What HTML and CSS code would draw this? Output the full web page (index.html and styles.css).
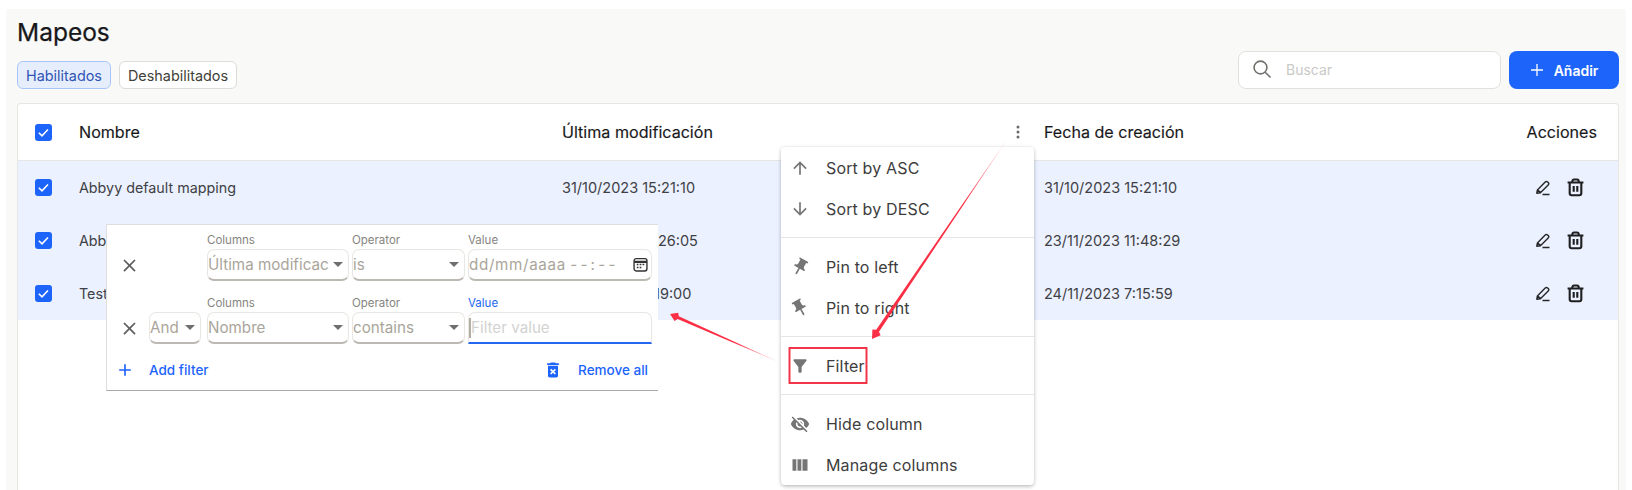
FILE: index.html
```html
<!DOCTYPE html>
<html lang="es">
<head>
<meta charset="utf-8">
<title>Mapeos</title>
<link rel="stylesheet" href="styles.css">
</head>
<body>
<svg class="defs" width="0" height="0" aria-hidden="true">
  <symbol id="i-check" viewBox="0 0 16 16"><path d="M3.6 8.2l3 3 5.6-6" fill="none" stroke="#fff" stroke-width="1.5"/></symbol>
  <symbol id="i-pencil" viewBox="0 0 16 16"><path d="M1.800 13.200l.6-3.200L10.200 2c.7-.7 1.700-.7 2.400 0l.6.6c.7.7.7 1.700 0 2.400l-7.800 7.800-3.600.4zM2.800 10l3 2.800M7.500 14.500h7" fill="none" stroke="#27272a" stroke-width="1.400" stroke-linejoin="round"/></symbol>
  <symbol id="i-trash" viewBox="0 0 18 18"><path d="M1.500 4.200h15M3.500 4.200v10.300c0 1 .7 1.800 1.800 1.800h7.400c1.100 0 1.800-.8 1.800-1.800V4.200M6 4V3c0-1 .7-1.600 1.600-1.600h2.800c.9 0 1.600.6 1.600 1.600v1M7.300 7.500v5.500M10.700 7.500v5.500" fill="none" stroke="#1f1f22" stroke-width="2"/></symbol>
  <symbol id="i-close" viewBox="0 0 24 24"><path d="M19 6.410L17.590 5 12 10.590 6.410 5 5 6.410 10.590 12 5 17.590 6.410 19 12 13.410 17.590 19 19 17.590 13.410 12z"/></symbol>
  <symbol id="i-caret" viewBox="0 0 10 5"><path d="M0 0h10L5 5z"/></symbol>
  <symbol id="i-pin" viewBox="0 0 24 24"><path d="M16 9V4h1c.55 0 1-.45 1-1s-.45-1-1-1H7c-.55 0-1 .45-1 1s.45 1 1 1h1v5c0 1.660-1.340 3-3 3v2h5.970v7l1 1 1-1v-7H19v-2c-1.660 0-3-1.340-3-3z"/></symbol>
</svg>

<main class="panel">
  <h1 class="title">Mapeos</h1>
  <div class="toolbar">
    <div class="chips">
      <span class="chip chip-on">Habilitados</span>
      <span class="chip">Deshabilitados</span>
    </div>
    <div class="actions">
      <div class="search">
        <svg class="search-icon" viewBox="0 0 20 20"><circle cx="8.500" cy="8.500" r="6.400" fill="none" stroke="#6f6f6c" stroke-width="1.600"/><path d="M13.200 13.200l5.300 5.300" stroke="#6f6f6c" stroke-width="1.600"/></svg>
        <span class="search-text">Buscar</span>
      </div>
      <button class="add"><svg viewBox="0 0 14 14"><path d="M7 1v12M1 7h12" stroke="#fff" stroke-width="1.300"/></svg>Añadir</button>
    </div>
  </div>

  <section class="table">
    <div class="row head">
      <span class="check"><svg><use href="#i-check"/></svg></span>
      <span>Nombre</span>
      <span class="head-menu">Última modificación
        <svg class="dots" viewBox="0 0 4 14"><circle cx="2" cy="2" r="1.500"/><circle cx="2" cy="7" r="1.500"/><circle cx="2" cy="12" r="1.500"/></svg>
      </span>
      <span>Fecha de creación</span>
      <span class="right">Acciones</span>
    </div>
    <div class="row body">
      <span class="check"><svg><use href="#i-check"/></svg></span>
      <span class="name">Abbyy default mapping</span>
      <span>31/10/2023 15:21:10</span>
      <span>31/10/2023 15:21:10</span>
      <span class="row-actions"><svg class="ic-pen"><use href="#i-pencil"/></svg><svg class="ic-trash"><use href="#i-trash"/></svg></span>
    </div>
    <div class="row body">
      <span class="check"><svg><use href="#i-check"/></svg></span>
      <span class="name">Abbyy mapping</span>
      <span>23/11/2023 11:26:05</span>
      <span>23/11/2023 11:48:29</span>
      <span class="row-actions"><svg class="ic-pen"><use href="#i-pencil"/></svg><svg class="ic-trash"><use href="#i-trash"/></svg></span>
    </div>
    <div class="row body">
      <span class="check"><svg><use href="#i-check"/></svg></span>
      <span class="name">Test mapping</span>
      <span>24/11/2023 7:19:00</span>
      <span>24/11/2023 7:15:59</span>
      <span class="row-actions"><svg class="ic-pen"><use href="#i-pencil"/></svg><svg class="ic-trash"><use href="#i-trash"/></svg></span>
    </div>
  </section>
</main>

<aside class="filter">
  <div class="f-row">
    <svg class="f-x"><use href="#i-close"/></svg>
    <span></span>
    <div class="f-field"><label>Columns</label><div class="f-box"><span>Última modificac</span><svg class="caret"><use href="#i-caret"/></svg></div></div>
    <div class="f-field"><label>Operator</label><div class="f-box"><span>is</span><svg class="caret"><use href="#i-caret"/></svg></div></div>
    <div class="f-field"><label>Value</label><div class="f-box"><span><span class="f-date">dd/mm/aaaa</span> <span class="f-time">--:--</span></span><svg class="cal" viewBox="0 0 14 14"><rect x="1" y="1.500" width="12" height="11.500" rx="2" fill="none" stroke="#333" stroke-width="1.300"/><path d="M1 4.600h12" stroke="#333" stroke-width="2"/><path d="M3.500 7h1.600M6.200 7h1.600M8.900 7h1.600M3.500 9.800h1.600M6.200 9.800h1.600" stroke="#333" stroke-width="1.400"/></svg></div></div>
  </div>
  <div class="f-row">
    <svg class="f-x"><use href="#i-close"/></svg>
    <div class="f-field f-and"><div class="f-box"><span>And</span><svg class="caret"><use href="#i-caret"/></svg></div></div>
    <div class="f-field"><label>Columns</label><div class="f-box"><span>Nombre</span><svg class="caret"><use href="#i-caret"/></svg></div></div>
    <div class="f-field"><label>Operator</label><div class="f-box"><span>contains</span><svg class="caret"><use href="#i-caret"/></svg></div></div>
    <div class="f-field f-active"><label>Value</label><div class="f-box"><i class="cursor"></i><span>Filter value</span></div></div>
  </div>
  <div class="f-foot">
    <span class="f-link"><svg class="f-plus" viewBox="0 0 24 24"><path d="M19 13h-6v6h-2v-6H5v-2h6V5h2v6h6v2z"/></svg>Add filter</span>
    <span class="f-link f-remove"><svg class="f-del" viewBox="0 0 24 24"><path d="M6 19c0 1.100.9 2 2 2h8c1.100 0 2-.9 2-2V7H6v12zm2.460-7.120l1.410-1.410L12 12.590l2.120-2.120 1.410 1.410L13.410 14l2.120 2.120-1.410 1.410L12 15.410l-2.120 2.120-1.410-1.410L10.590 14l-2.130-2.120zM15.500 4l-1-1h-5l-1 1H5v2h14V4z"/></svg>Remove all</span>
  </div>
</aside>

<nav class="menu">
  <div class="m-item"><svg viewBox="0 0 24 24"><path d="M4 12l1.410 1.410L11 7.830V20h2V7.830l5.580 5.590L20 12l-8-8-8 8z"/></svg>Sort by ASC</div>
  <div class="m-item"><svg viewBox="0 0 24 24"><path d="M20 12l-1.410-1.410L13 16.170V4h-2v12.170l-5.580-5.590L4 12l8 8 8-8z"/></svg>Sort by DESC</div>
  <hr>
  <div class="m-item"><svg class="pin-l"><use href="#i-pin"/></svg>Pin to left</div>
  <div class="m-item"><svg class="pin-r"><use href="#i-pin"/></svg>Pin to right</div>
  <hr>
  <div class="m-item"><svg viewBox="0 0 24 24"><path d="M4.250 5.610C6.270 8.200 10 13 10 13v6c0 .55.45 1 1 1h2c.55 0 1-.45 1-1v-6s3.720-4.800 5.740-7.390c.51-.66.04-1.610-.79-1.610H5.040c-.83 0-1.300.95-.79 1.610z"/></svg>Filter</div>
  <hr>
  <div class="m-item"><svg viewBox="0 0 24 24"><path d="M12 7c2.760 0 5 2.240 5 5 0 .65-.13 1.260-.36 1.830l2.920 2.920c1.510-1.260 2.700-2.890 3.430-4.750-1.730-4.390-6-7.500-11-7.500-1.400 0-2.740.25-3.980.7l2.160 2.160C10.740 7.130 11.350 7 12 7zM2 4.270l2.280 2.280.46.46C3.080 8.300 1.780 10.020 1 12c1.730 4.390 6 7.500 11 7.500 1.550 0 3.030-.3 4.380-.84l.42.42L19.730 22 21 20.730 3.270 3 2 4.270zM7.530 9.800l1.550 1.550c-.05.21-.08.43-.08.65 0 1.660 1.340 3 3 3 .22 0 .44-.03.65-.08l1.550 1.550c-.67.33-1.410.53-2.200.53-2.760 0-5-2.240-5-5 0-.79.2-1.530.53-2.200zm4.310-.78l3.150 3.150.02-.16c0-1.660-1.340-3-3-3l-.17.01z"/></svg>Hide column</div>
  <div class="m-item"><svg viewBox="0 0 24 24"><path d="M3 5h4.600v14H3zM9 5h4.600v14H9zM15 5h6v14h-6z"/></svg>Manage columns</div>
</nav>

<svg class="notes" viewBox="0 0 1632 490" aria-hidden="true">
  <defs>
    <linearGradient id="fade1" gradientUnits="userSpaceOnUse" x1="1010" y1="135" x2="965" y2="205"><stop offset="0" stop-color="#fb2f45" stop-opacity=".1"/><stop offset="1" stop-color="#fb2f45"/></linearGradient>
    <linearGradient id="fade2" gradientUnits="userSpaceOnUse" x1="781" y1="363" x2="735" y2="343"><stop offset="0" stop-color="#fb2f45" stop-opacity=".1"/><stop offset="1" stop-color="#fb2f45"/></linearGradient>
  </defs>
  <path d="M1010 135L879 331.700L880.600 335.200L872 339L872.400 329.600L876.200 329.700Z" fill="url(#fade1)"/>
  <path d="M781 363L678.800 316.300L678.200 312.700L670 314L674.600 320.900L677.600 319.100Z" fill="url(#fade2)"/>
  <rect x="789.500" y="348" width="77" height="35" fill="none" stroke="#f3354a" stroke-width="2"/>
</svg>
</body>
</html>
```
FILE: styles.css
```css
* { box-sizing: border-box; }
html, body { margin: 0; height: 100%; }
body {
  width: 1632px;
  height: 490px;
  overflow: hidden;
  position: relative;
  background: #fff;
  font-family: Inter, "Liberation Sans", sans-serif;
  color: #3f3f46;
}
.defs { position: absolute; }
.panel {
  margin: 9px 6px 0;
  height: 481px;
  padding: 10px 7px 0 11px;
  background: #f9f9f7;
  display: flex;
  flex-direction: column;
}
.title {
  margin: 0;
  font-size: 24.500px;
  line-height: 26px;
  font-weight: 400;
  color: #18181b;
  -webkit-text-stroke: .25px #18181b;
}
.toolbar {
  display: flex;
  justify-content: space-between;
  align-items: flex-end;
  margin-top: -3px;
  height: 47px;
}
.chips { display: flex; gap: 8px; }
.chip {
  height: 28px;
  padding: 0 8px;
  display: flex;
  align-items: center;
  font-size: 14.400px;
  color: #3f3f3a;
  background: #fff;
  border: 1px solid #dddcd8;
  border-radius: 6px;
}
.chip-on { color: #2f55b4; background: #e6eefe; border-color: #a9c6fb; }
.actions { display: flex; gap: 8px; }
.search {
  width: 263px;
  height: 38px;
  display: flex;
  align-items: center;
  gap: 14px;
  padding-left: 13px;
  padding-bottom: 2px;
  background: #fff;
  border: 1px solid #e2e1dd;
  border-radius: 8px;
}
.search-icon { width: 20px; height: 20px; }
.search-text { font-size: 14px; color: #c9c9c6; }
.add {
  width: 110px;
  height: 38px;
  border: 0;
  border-radius: 8px;
  background: #1d64fb;
  color: #fff;
  font: 600 14px Inter, sans-serif;
  display: flex;
  align-items: center;
  justify-content: center;
  gap: 10px;
}
.add svg { width: 14px; height: 14px; }
.table {
  flex: 1;
  margin-top: 14px;
  background: #fff;
  border: 1px solid #e6e6e3;
  border-bottom: 0;
  border-radius: 4px 4px 0 0;
}
.row {
  display: grid;
  grid-template-columns: 61px 483px 482px 1fr auto;
  align-items: center;
  padding-right: 21px;
}
.head {
  height: 57px;
  font-size: 16.100px;
  color: #18181b;
  border-bottom: 1px solid #e6e6e6;
  -webkit-text-stroke: .15px #18181b;
}
.body {
  height: 53px;
  font-size: 14.500px;
  color: #3f3f46;
  background: #ebf1fe;
}
.name { font-size: 14.300px; }
.check {
  margin-left: 17px;
  width: 17px;
  height: 17px;
  border-radius: 3px;
  background: #1d64fb;
}
.check svg { display: block; width: 17px; height: 17px; }
.head-menu { display: flex; justify-content: space-between; align-items: center; padding-right: 24px; }
.dots { width: 4px; height: 14px; fill: #6b6b6b; }
.right { text-align: right; }
.row-actions { display: flex; gap: 15px; align-items: center; padding-right: 12px; }
.ic-pen { width: 16px; height: 16px; }
.ic-trash { width: 19px; height: 19px; }

.filter {
  position: absolute;
  left: 106px;
  top: 224px;
  width: 552px;
  height: 167px;
  background: #fff;
  border: 1px solid #dedede;
  border-right: 0;
  border-bottom: 1px solid #a8a8a8;
  padding: 6px 6px 0 0;
  display: flex;
  flex-direction: column;
  gap: 13px;
}
.f-row {
  display: grid;
  grid-template-columns: 39px 55px 142px 113px 1fr;
  column-gap: 3px;
  align-items: end;
  height: 50px;
}
.f-x {
  width: 21px;
  height: 21px;
  margin: 0 0 5px 12px;
  fill: #5f5f5f;
}
.f-and { padding-right: 3px; }
.f-field label {
  display: block;
  font-size: 11.500px;
  line-height: 14px;
  color: #85857f;
  margin-bottom: 2px;
}
.f-box {
  height: 32px;
  display: flex;
  align-items: center;
  justify-content: space-between;
  font-size: 15.200px;
  color: #aaa59b;
  border: 1px solid #e8e7e3;
  border-bottom: 2px solid #bcb9b2;
  border-radius: 7px;
  padding: 0 5px 0 0;
  white-space: nowrap;
  overflow: hidden;
}
.caret { width: 10px; height: 5px; flex: none; fill: #6e6e6e; }
.cal { width: 15px; height: 15px; flex: none; margin-right: -2px; }
.f-date { letter-spacing: .67px; }
.f-time { letter-spacing: 3.200px; }
.f-active label { color: #2468f2; }
.f-active .f-box {
  color: #d3d3d1;
  border-bottom: 2px solid #2468f2;
  border-radius: 7px 7px 0 0;
  justify-content: flex-start;
}
.cursor { width: 2px; height: 20px; background: #b3aea4; }
.f-foot {
  display: flex;
  justify-content: space-between;
  align-items: center;
  margin-top: 3px;
  padding: 0 4px 0 8px;
}
.f-link {
  display: flex;
  align-items: center;
  font-size: 13.500px;
  font-weight: 500;
  color: #1d64fb;
}
.f-plus { width: 20px; height: 20px; fill: #1d64fb; margin-right: 14px; }
.f-del { width: 20px; height: 20px; fill: #1d64fb; margin-right: 15px; }

.menu {
  position: absolute;
  left: 781px;
  top: 147px;
  width: 253px;
  background: #fff;
  border-radius: 4px;
  box-shadow: 0 2px 4px -1px rgba(0,0,0,.2), 0 1px 5px rgba(0,0,0,.12), 0 0 2px rgba(0,0,0,.08);
}
.menu hr { margin: 8px 0; height: 1px; border: 0; background: #e5e5e5; }
.m-item {
  height: 41px;
  display: flex;
  align-items: center;
  padding-left: 8px;
  font-size: 16px;
  letter-spacing: .15px;
  color: #3d3d3d;
}
.m-item svg {
  width: 20px;
  height: 20px;
  fill: #757575;
  margin-right: 16px;
  margin-left: 1px;
  flex: none;
}
.pin-l { transform: rotate(30deg); }
.pin-r { transform: rotate(-30deg); }

.notes {
  position: absolute;
  left: 0;
  top: 0;
  width: 1632px;
  height: 490px;
  pointer-events: none;
}
```
